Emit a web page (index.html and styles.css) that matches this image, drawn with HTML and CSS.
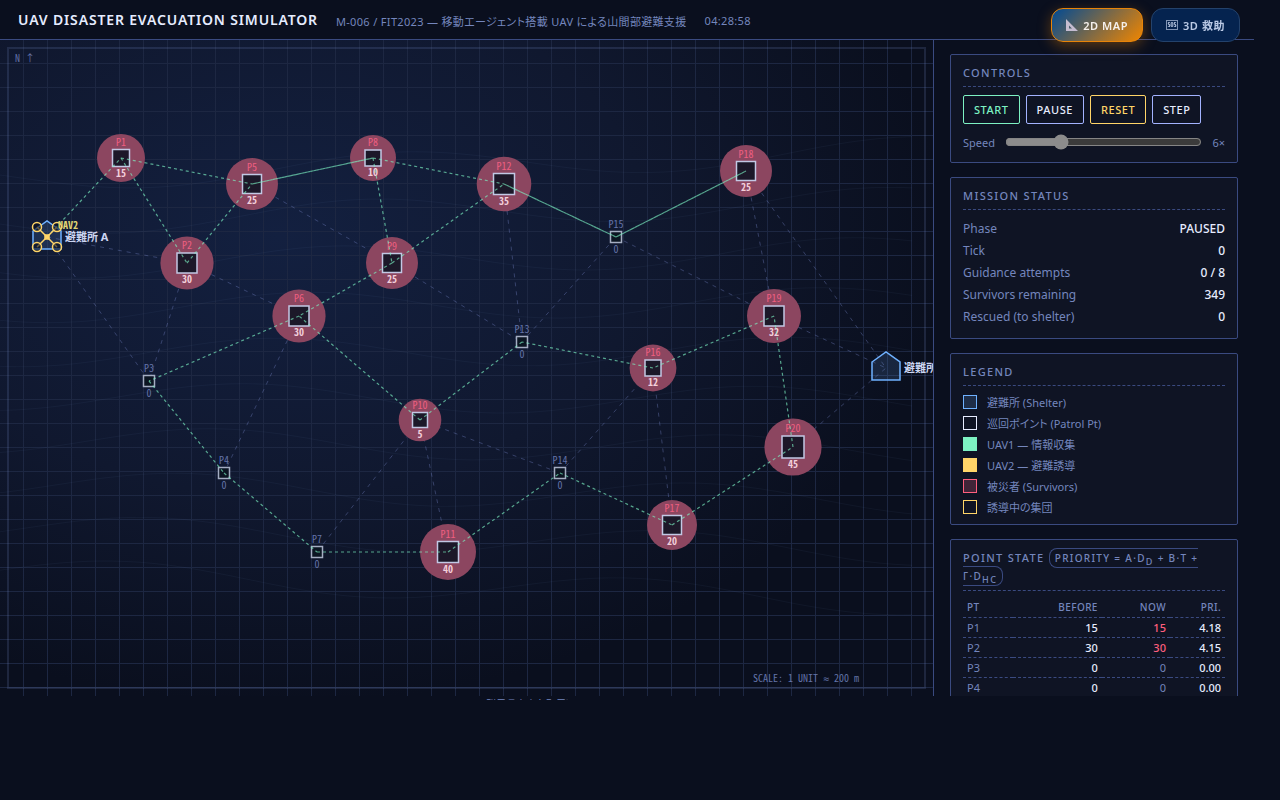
FILE: index.html
```html
<!DOCTYPE html>
<html lang="ja">
<head>
    <meta charset="UTF-8">
    <meta name="viewport" content="width=device-width, initial-scale=1.0">
    <title>UAV Disaster Evacuation Simulator</title>
    <link rel="stylesheet" href="styles.css">
</head>
<body>
    <nav class="view-switch">
        <button class="view-btn active"><svg class="view-icon" viewBox="0 0 12 12"><path d="M0 0L12 12H0ZM3 6.5V9.5H6Z" fill="currentColor" fill-rule="evenodd"/></svg>2D MAP</button>
        <button class="view-btn"><span class="sos">SOS</span>3D 救助</button>
    </nav>

    <div class="app">
        <header class="header">
            <h1>UAV DISASTER EVACUATION SIMULATOR</h1>
            <span class="meta">M-006 / FIT2023 — 移動エージェント搭載 UAV による山間部避難支援</span>
            <span class="meta">04:28:58</span>
        </header>

        <div class="main">
            <section class="map-wrap">
                <svg class="map" id="map" viewBox="0 0 933 656" preserveAspectRatio="xMinYMin slice"></svg>
            </section>

            <aside class="side">
                <section class="panel">
                    <h2>CONTROLS</h2>
                    <div class="btn-row">
                        <button class="btn start">START</button>
                        <button class="btn">PAUSE</button>
                        <button class="btn reset">RESET</button>
                        <button class="btn">STEP</button>
                    </div>
                    <div class="slider-row">
                        <label for="speed">Speed</label>
                        <input type="range" id="speed" min="1" max="20" value="6">
                        <span>6×</span>
                    </div>
                </section>

                <section class="panel">
                    <h2>MISSION STATUS</h2>
                    <dl class="stats">
                        <div><dt>Phase</dt><dd>PAUSED</dd></div>
                        <div><dt>Tick</dt><dd>0</dd></div>
                        <div><dt>Guidance attempts</dt><dd>0 / 8</dd></div>
                        <div><dt>Survivors remaining</dt><dd>349</dd></div>
                        <div><dt>Rescued (to shelter)</dt><dd>0</dd></div>
                    </dl>
                </section>

                <section class="panel">
                    <h2>LEGEND</h2>
                    <ul class="legend">
                        <li><i class="sw shelter"></i>避難所 (Shelter)</li>
                        <li><i class="sw patrol"></i>巡回ポイント (Patrol Pt)</li>
                        <li><i class="sw uav1"></i>UAV1 — 情報収集</li>
                        <li><i class="sw uav2"></i>UAV2 — 避難誘導</li>
                        <li><i class="sw survivors"></i>被災者 (Survivors)</li>
                        <li><i class="sw group"></i>誘導中の集団</li>
                    </ul>
                </section>

                <section class="panel">
                    <h2>POINT STATE <span class="pill">PRIORITY = Α·D<sub>D</sub> + Β·T + Γ·D<sub>HC</sub></span></h2>
                    <table class="points">
                        <thead>
                            <tr><th>PT</th><th>BEFORE</th><th>NOW</th><th>PRI.</th></tr>
                        </thead>
                        <tbody>
                            <tr><td>P1</td><td>15</td><td class="hot">15</td><td>4.18</td></tr>
                            <tr><td>P2</td><td>30</td><td class="hot">30</td><td>4.15</td></tr>
                            <tr><td>P3</td><td>0</td><td class="none">0</td><td>0.00</td></tr>
                            <tr><td>P4</td><td>0</td><td class="none">0</td><td>0.00</td></tr>
                        </tbody>
                    </table>
                </section>
            </aside>
        </div>

        <footer class="footer">群馬県中之条町周辺</footer>
    </div>

    <script src="map.js"></script>
</body>
</html>
```
FILE: styles.css
```css
:root {
    --bg: #0a0f1e;
    --panel: #0f1424;
    --line: #3a4a80;
    --muted: #7486bd;
    --text: #e6ecff;
    --green: #7df2c3;
    --yellow: #ffd568;
    --red: #ff5f7e;
    --blue: #6fb1ff;
}

* {
    margin: 0;
    padding: 0;
    box-sizing: border-box;
}

body {
    font-family: "Noto Sans", "Noto Sans CJK JP", sans-serif;
    font-feature-settings: "palt";
    font-size: 12px;
    background: var(--bg);
    color: var(--text);
}

.app {
    display: flex;
    flex-direction: column;
    height: calc(100vh - 100px);
    margin-right: 26px;
    overflow: hidden;
}

.header {
    display: flex;
    align-items: center;
    gap: 18px;
    flex: 0 0 40px;
    padding: 0 18px;
    border-bottom: 1px solid var(--line);
}

.header h1 {
    font-size: 14px;
    font-weight: 600;
    letter-spacing: 0.06em;
}

.meta {
    font-size: 11px;
    letter-spacing: 0.03em;
    color: var(--muted);
    padding-top: 2px;
}

.view-switch {
    position: fixed;
    top: 8px;
    right: 40px;
    z-index: 10;
    display: flex;
    gap: 8px;
}

.view-btn {
    display: flex;
    align-items: center;
    gap: 5px;
    height: 34px;
    padding: 0 14px;
    border: 1px solid #24426b;
    border-radius: 12px;
    background: #05234f;
    color: #bccbe6;
    font: 600 11px "Noto Sans", "Noto Sans CJK JP", sans-serif;
    letter-spacing: 0.05em;
    cursor: pointer;
}

.view-btn.active {
    background: linear-gradient(135deg, #004a94, #f08600);
    border-color: #e88408;
    color: #f5f0ec;
    box-shadow: 0 4px 14px rgba(240, 134, 0, 0.35);
}

.view-icon {
    width: 12px;
    height: 12px;
    color: #c5bcd0;
}

.sos {
    width: 12px;
    border: 1px solid #8094b5;
    font: 700 6px "Noto Sans Mono CJK JP", monospace;
    line-height: 8px;
    letter-spacing: 0;
}

.main {
    display: flex;
    flex: 1;
    min-height: 0;
}

.map-wrap {
    flex: 1;
    min-width: 0;
    background: radial-gradient(ellipse at 30% 30%, #132040 0%, #10182f 40%, #0a0f1e 72%);
}

.map {
    display: block;
    width: 100%;
    height: 100%;
}

.map text {
    font-family: "Noto Sans Mono CJK JP", "Noto Sans CJK JP", monospace;
    font-size: 10px;
    fill: #6373a8;
}

.map .approx { font-family: "DejaVu Sans Mono", monospace; }
.map .mid { text-anchor: middle; }
.map .name-hot { fill: #ee5f80; }
.map .count-hot { fill: #f3cfdb; font-weight: 700; }
.map .uav-name { fill: #e2d674; font-weight: 700; }

.map .shelter-name {
    font-family: "Noto Sans", "Noto Sans CJK JP", sans-serif;
    font-size: 11px;
    font-weight: 700;
    fill: #ccd6f2;
}

.grid { stroke: #1d2742; }
.frame { fill: none; stroke: #7080c0; stroke-opacity: 0.2; stroke-width: 2; }
.contour { fill: none; stroke: #7fa0d0; stroke-opacity: 0.06; }
.edge { stroke: #7080c0; stroke-opacity: 0.4; stroke-dasharray: 4 5; }
.route { stroke: #7df2c3; stroke-opacity: 0.65; stroke-width: 1.2; stroke-dasharray: 3 3; }
.halo { fill: #8c4660; }
.point { fill: #1c1829; stroke: #c2c8e4; stroke-width: 1.5; }
.point.empty { fill: #0b1522; stroke: #a4adc2; }
.house { fill: #6fb1ff; fill-opacity: 0.14; stroke: #6fb1ff; stroke-width: 1.5; }
.uav { fill: none; stroke: #ffd568; stroke-width: 1.5; }
.uav circle { fill: #0a0f1e; fill-opacity: 0.6; }
.uav rect { fill: #ffd568; }

.side {
    display: flex;
    flex-direction: column;
    gap: 14px;
    width: 321px;
    flex-shrink: 0;
    padding: 14px 16px;
    border-left: 1px solid var(--line);
    overflow: hidden;
}

.panel {
    flex-shrink: 0;
    padding: 9px 12px 10px;
    border: 1px solid var(--line);
    border-radius: 2px;
    background: var(--panel);
}

.panel h2 {
    padding-bottom: 5px;
    margin-bottom: 8px;
    border-bottom: 1px dashed var(--line);
    font-size: 11px;
    font-weight: 500;
    line-height: 17px;
    letter-spacing: 0.12em;
    color: var(--muted);
}

.btn-row {
    display: flex;
    gap: 6px;
}

.btn {
    height: 29px;
    padding: 0 10px;
    border: 1px solid #a3b3ff;
    border-radius: 2px;
    background: transparent;
    color: var(--text);
    font: 500 11px "Noto Sans", sans-serif;
    letter-spacing: 0.05em;
    cursor: pointer;
}

.btn.start { color: var(--green); border-color: var(--green); }
.btn.reset { color: var(--yellow); border-color: var(--yellow); }

.slider-row {
    display: flex;
    align-items: center;
    gap: 10px;
    height: 20px;
    margin-top: 8px;
    color: var(--muted);
    font-size: 11px;
}

.slider-row input {
    flex: 1;
    min-width: 0;
    color-scheme: dark;
    accent-color: #8c8c8c;
}

.stats div {
    display: flex;
    justify-content: space-between;
    line-height: 22px;
}

.stats dt { color: var(--muted); }
.stats dd { font-weight: 500; }

.legend {
    display: flex;
    flex-direction: column;
    gap: 6px;
    list-style: none;
}

.legend li {
    display: flex;
    align-items: center;
    gap: 10px;
    height: 15px;
    font-size: 11px;
    color: var(--muted);
}

.sw {
    width: 14px;
    height: 14px;
    border: 1px solid;
}

.sw.shelter { border-color: var(--blue); background: #1e2d47; }
.sw.patrol { border-color: var(--text); }
.sw.uav1 { border-color: var(--green); background: var(--green); }
.sw.uav2 { border-color: var(--yellow); background: var(--yellow); }
.sw.survivors { border-color: var(--red); background: #402438; }
.sw.group { border-color: var(--yellow); }

.pill {
    padding: 2px 5px;
    border: 1px solid var(--line);
    border-radius: 8px;
    font-size: 10px;
}

.pill sub { font-size: 9px; line-height: 0; }

.points {
    width: 100%;
    table-layout: fixed;
    border-collapse: collapse;
    font-size: 11px;
}

.points th,
.points td {
    height: 20px;
    padding: 0 4px;
    border-bottom: 1px dashed var(--line);
    text-align: right;
    font-weight: 500;
}

.points th {
    height: 18px;
    font-size: 10px;
    line-height: 17px;
    letter-spacing: 0.04em;
    color: var(--muted);
}

.points th:nth-child(1) { width: 19%; }
.points th:nth-child(2) { width: 34%; }
.points th:nth-child(3) { width: 26%; }
.points th:first-child, .points td:first-child { text-align: left; }
.points td:first-child, .points .none { color: var(--muted); font-weight: 400; }
.points .hot { color: var(--red); }

.footer {
    flex: 0 0 4px;
    min-height: 0;
    margin-right: 192px;
    overflow: hidden;
    text-align: center;
    font-size: 10px;
    line-height: 16px;
    color: var(--muted);
}
```
FILE: map.js
```js
const NS = 'http://www.w3.org/2000/svg';
const map = document.getElementById('map');

// id: [x, y, survivors, halo radius, square size]
const points = {
    P1: [121, 118, 15, 24, 17],
    P2: [187, 223, 30, 26.6, 20],
    P3: [149, 341, 0, 0, 11],
    P4: [224, 433, 0, 0, 11],
    P5: [252, 144, 25, 26, 19],
    P6: [299, 276, 30, 26.6, 20],
    P7: [317, 512, 0, 0, 11],
    P8: [373, 118, 10, 23, 16],
    P9: [392, 223, 25, 26, 19],
    P10: [420, 380, 5, 21.3, 15],
    P11: [448, 512, 40, 28, 21],
    P12: [504, 144, 35, 27.3, 21],
    P13: [522, 302, 0, 0, 11],
    P14: [560, 433, 0, 0, 11],
    P15: [616, 197, 0, 0, 11],
    P16: [653, 328, 12, 23.4, 16],
    P17: [672, 485, 20, 25, 19],
    P18: [746, 131, 25, 26, 19],
    P19: [774, 276, 32, 27, 20],
    P20: [793, 407, 45, 28.6, 22]
};
const shelters = { A: [47, 197], B: [886, 328] };

const edges = 'A-P2 A-P3 P2-P3 P2-P6 P5-P9 P6-P4 P9-P13 P12-P13 P13-P15 P15-P19 P18-P19 P18-B P19-B P20-B P10-P14 P10-P11 P10-P7 P14-P16 P16-P17';
const routes = 'A-P1 P1-P5 P1-P2 P2-P5 P5-P8 P8-P12 P8-P9 P9-P12 P9-P6 P12-P15 P15-P18 P6-P3 P3-P4 P4-P7 P7-P11 P11-P14 P14-P17 P17-P20 P20-P19 P19-P16 P16-P13 P13-P10 P10-P6';
const doubled = 'P5-P8 P12-P15 P15-P18';

function add(tag, attrs, text, parent = map) {
    const el = document.createElementNS(NS, tag);
    for (const k in attrs) el.setAttribute(k, attrs[k]);
    if (text !== undefined) el.textContent = text;
    parent.appendChild(el);
    return el;
}

function lines(list, attrs) {
    list.split(' ').forEach(pair => {
        const [a, b] = pair.split('-').map(id => points[id] || shelters[id]);
        add('line', { x1: a[0], y1: a[1], x2: b[0], y2: b[1], ...attrs });
    });
}

// grid
for (let x = 23.5; x < 2400; x += 24) add('line', { class: 'grid', x1: x, y1: 0, x2: x, y2: 1600 });
for (let y = 23.5; y < 1600; y += 24) add('line', { class: 'grid', x1: 0, y1: y, x2: 2400, y2: y });

// contours
for (let i = 0; i < 10; i++) {
    let d = '';
    for (let x = 0; x <= 919; x += 8) {
        const wave = 14 * Math.cos((x - 400 + 31 * i) / 510 * Math.PI * 2);
        const y = 126 + i * 46.5 - wave + (x - 400) * (0.007 * i - 0.03);
        d += (x ? 'L' : 'M') + x + ' ' + y.toFixed(1);
    }
    add('path', { class: 'contour', d });
}

add('rect', { class: 'frame', x: 8, y: 8, width: 917, height: 640 });
add('text', { x: 15, y: 22 }, 'N ↑');
const scale = add('text', { x: 753, y: 642 }, 'SCALE: 1 UNIT ');
add('tspan', { class: 'approx' }, '≈', scale);
add('tspan', {}, ' 200 m', scale);

lines(edges, { class: 'edge' });

for (const id in points) {
    const [x, y, n, r, s] = points[id];
    if (n) add('circle', { class: 'halo', cx: x, cy: y, r });
    add('rect', { class: n ? 'point' : 'point empty', x: x - s / 2, y: y - s / 2, width: s, height: s });
    add('text', { class: n ? 'mid name-hot' : 'mid', x, y: y - s / 2 - 4 }, id);
    add('text', { class: n ? 'mid count-hot' : 'mid', x, y: y + s / 2 + 10 }, n);
}

lines(routes, { class: 'route' });
lines(doubled, { class: 'route', 'stroke-dashoffset': 3 });

for (const id in shelters) {
    const [x, y] = shelters[id];
    add('path', { class: 'house', d: `M${x - 14} ${y - 6}L${x} ${y - 16}L${x + 14} ${y - 6}V${y + 12}H${x - 14}Z` });
    add('text', { class: 'shelter-name', x: x + 18, y: y + 4 }, '避難所 ' + id);
}

// UAV2 waits at shelter A
const uav = add('g', { class: 'uav', transform: 'translate(47 197)' });
add('path', { d: 'M-10 -10L10 10M10 -10L-10 10' }, undefined, uav);
[[-10, -10], [10, -10], [-10, 10], [10, 10]].forEach(([cx, cy]) => add('circle', { cx, cy, r: 4.5 }, undefined, uav));
add('rect', { x: -2, y: -2, width: 4, height: 4 }, undefined, uav);
add('text', { class: 'uav-name', x: 58, y: 189 }, 'UAV2');
```
